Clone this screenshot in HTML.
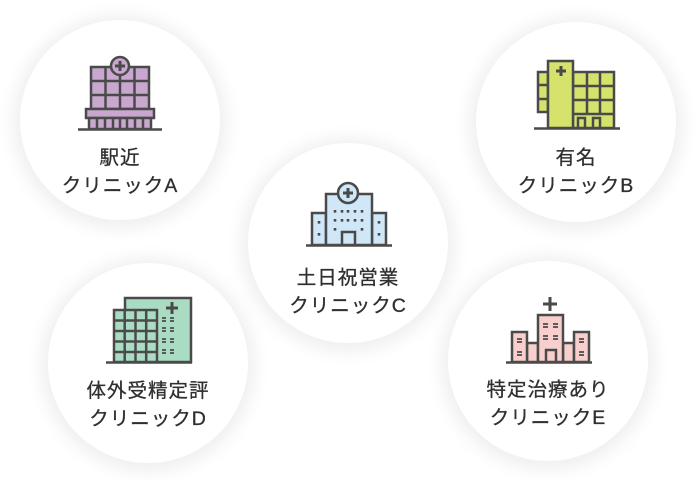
<!DOCTYPE html>
<html><head><meta charset="utf-8"><style>
html,body{margin:0;padding:0;background:#fff;width:696px;height:480px;overflow:hidden;position:relative}
.c{position:absolute;width:200px;height:200px;border-radius:50%;background:#fff;box-shadow:0 2px 18px 6px rgba(0,0,0,0.07)}
.t{position:absolute;width:200px;text-align:center;font-family:"Liberation Sans","Noto Sans CJK JP",sans-serif;font-size:19.5px;line-height:28px;color:#2f2f2f;letter-spacing:1px;-webkit-text-stroke:0.3px #2f2f2f}
svg{position:absolute;left:0;top:0}
</style></head><body>
<div class="c" style="left:20px;top:20px"></div>
<div class="c" style="left:476px;top:22px"></div>
<div class="c" style="left:248px;top:143px"></div>
<div class="c" style="left:48px;top:263px"></div>
<div class="c" style="left:448px;top:261px"></div>

<svg width="696" height="480" fill="none" stroke="#4a4a4a" stroke-width="2.5" stroke-linejoin="miter">
<g>
<rect x="91" y="67" width="58" height="42" fill="#c9a7cf"/>
<path d="M91 81H149M91 95H149M105.5 67V109M120 67V109M134.5 67V109"/>
<rect x="86" y="109" width="68" height="9" fill="#c9a7cf"/>
<rect x="89" y="118" width="62" height="11" fill="#c9a7cf"/>
<path d="M97 118V129M105 118V129M113 118V129M120 118V129M127 118V129M135 118V129M143 118V129"/>
<circle cx="120" cy="66" r="9" fill="#c9a7cf"/>
<path d="M120 61V71M115 66H125" stroke-width="3"/>
<path d="M78 129.5H162"/>
</g>
<g>
<rect x="538" y="72" width="10" height="40" fill="#d5e26c"/>
<path d="M538 85H548M538 99H548"/>
<rect x="573" y="72" width="41" height="56" fill="#d5e26c"/>
<path d="M573 86H614M573 100H614M573 114H614M587 72V114M600 72V114"/>
<rect x="548" y="61" width="25" height="67" fill="#d5e26c"/>
<rect x="578" y="118" width="7" height="10" fill="#d5e26c"/>
<rect x="593" y="118" width="7" height="10" fill="#d5e26c"/>
<path d="M561 66V76M556 71H566" stroke-width="3"/>
<path d="M534 128.5H620"/>
</g>
<g>
<rect x="312" y="213" width="14" height="32" fill="#cfe7f7"/>
<rect x="372" y="213" width="14" height="32" fill="#cfe7f7"/>
<rect x="326" y="194" width="46" height="51" fill="#cfe7f7"/>
<rect x="342" y="232" width="13" height="13" fill="#cfe7f7"/>
<circle cx="348" cy="193" r="10" fill="#cfe7f7"/>
<path d="M348 188V198M343 193H353" stroke-width="3"/>
<g stroke-width="2.6">
<path d="M335 210v2.6M342 210v2.6M348 210v2.6M355 210v2.6M362 210v2.6M335 219v2.6M342 219v2.6M348 219v2.6M355 219v2.6M362 219v2.6M335 228v2.6M362 228v2.6M319 221v2.6M319 233v2.6M379 221v2.6M379 233v2.6"/>
</g>
<path d="M306 245.5H392"/>
</g>
<g>
<rect x="125" y="298" width="66" height="64" fill="#aadcc4"/>
<rect x="114" y="310" width="43" height="52" fill="#aadcc4"/>
<path d="M114 320.5H157M114 331H157M114 341.5H157M114 352H157M124.7 310V362M135.5 310V362M146.2 310V362"/>
<path d="M172 302V314M166 308H178" stroke-width="3"/>
<g stroke-width="1.8">
<path d="M162 318h4M162 321h4M170 318h4M170 321h4M162 328h4M162 331h4M170 328h4M170 331h4M162 339h4M162 342h4M170 339h4M170 342h4M162 350h4M162 353h4M170 350h4M170 353h4"/>
</g>
<path d="M106 362.5H192"/>
</g>
<g>
<rect x="527" y="343" width="11" height="19" fill="#f8cfcd"/>
<rect x="563" y="343" width="11" height="19" fill="#f8cfcd"/>
<rect x="512" y="332" width="15" height="30" fill="#f8cfcd"/>
<rect x="574" y="332" width="15" height="30" fill="#f8cfcd"/>
<rect x="538" y="315" width="25" height="47" fill="#f8cfcd"/>
<rect x="546" y="350" width="10" height="12" fill="#f8cfcd"/>
<path d="M550 297V311M543 304H557" stroke-width="3"/>
<g stroke-width="1.8">
<path d="M543 324h5M543 327h5M553 324h5M553 327h5M543 336h5M543 339h5M553 336h5M553 339h5M517 339h5M517 342h5M517 352h5M517 355h5M579 339h5M579 342h5M579 352h5M579 355h5"/>
</g>
<path d="M506 362.5H592"/>
</g>
</svg>

<div class="t" style="left:20px;top:144px">駅近<br>クリニックA</div>
<div class="t" style="left:476px;top:144px">有名<br>クリニックB</div>
<div class="t" style="left:248px;top:264px">土日祝営業<br>クリニックC</div>
<div class="t" style="left:48px;top:377px">体外受精定評<br>クリニックD</div>
<div class="t" style="left:448px;top:376px">特定治療あり<br>クリニックE</div>
</body></html>
